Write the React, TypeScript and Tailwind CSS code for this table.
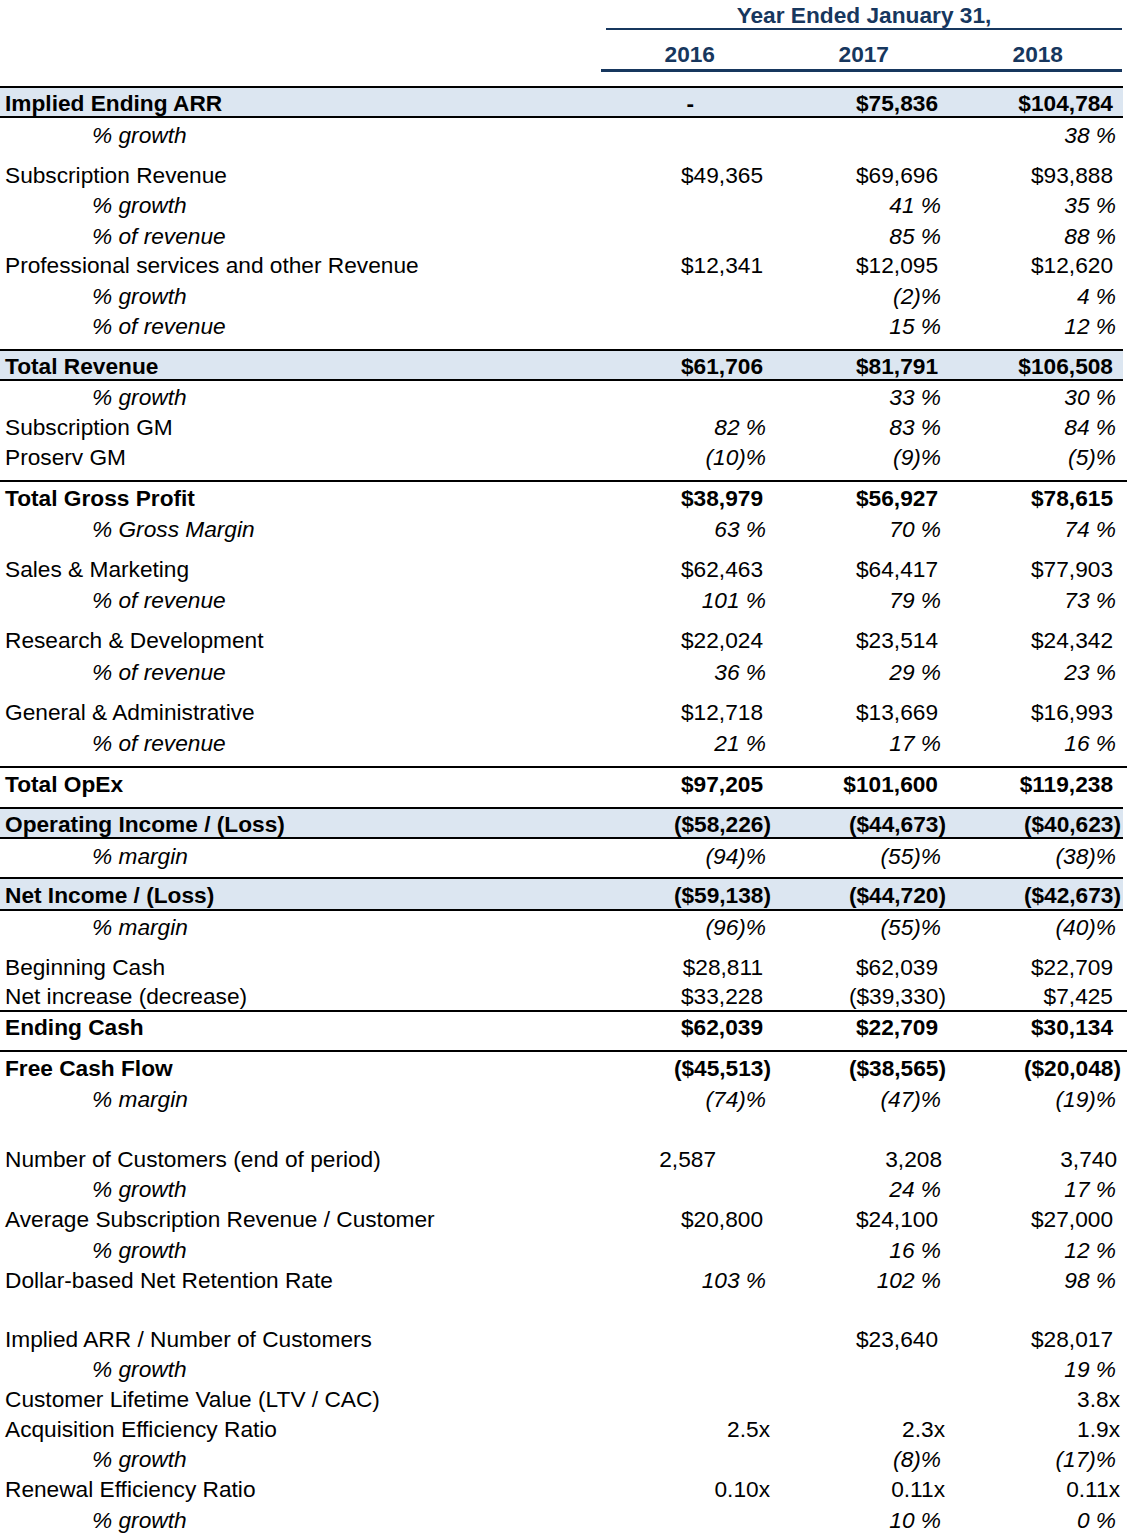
import React from "react";

type K = "n" | "p" | "i" | "x" | "c" | "c1" | "d";
type Cell = [string, K] | null;

type Item =
  | { t: "sp"; h: number }
  | {
      t: "row";
      h: number;
      label: string;
      s: "n" | "b" | "i";
      v: [Cell, Cell, Cell];
      band?: boolean;
      line?: boolean;
    };

const kcls: Record<K, string> = {
  n: "pr-[8px]",
  p: "pr-0",
  i: "italic pr-[5px]",
  x: "pr-[1px]",
  c: "pr-[4px]",
  c1: "pr-[55px]",
  d: "pr-[77px]",
};

const hcls: Record<number, string> = {
  6: "h-[6px]",
  8: "h-[8px]",
  9: "h-[9px]",
  10: "h-[10px]",
  14: "h-[14px]",
  29: "h-[29px]",
  30: "h-[30px]",
  31: "h-[31px]",
  32: "h-[32px]",
  33: "h-[33px]",
  34: "h-[34px]",
};

const N = (t: string): Cell => [t, "n"];
const P = (t: string): Cell => [t, "p"];
const I = (t: string): Cell => [t, "i"];
const X = (t: string): Cell => [t, "x"];

const items: Item[] = [
  { t: "row", h: 32, label: "Implied Ending ARR", s: "b", band: true, v: [["-", "d"], N("$75,836"), N("$104,784")] },
  { t: "row", h: 32, label: "% growth", s: "i", v: [null, null, I("38 %")] },
  { t: "sp", h: 9 },
  { t: "row", h: 30, label: "Subscription Revenue", s: "n", v: [N("$49,365"), N("$69,696"), N("$93,888")] },
  { t: "row", h: 31, label: "% growth", s: "i", v: [null, I("41 %"), I("35 %")] },
  { t: "row", h: 30, label: "% of revenue", s: "i", v: [null, I("85 %"), I("88 %")] },
  { t: "row", h: 29, label: "Professional services and other Revenue", s: "n", v: [N("$12,341"), N("$12,095"), N("$12,620")] },
  { t: "row", h: 32, label: "% growth", s: "i", v: [null, I("(2)%"), I("4 %")] },
  { t: "row", h: 29, label: "% of revenue", s: "i", v: [null, I("15 %"), I("12 %")] },
  { t: "sp", h: 9 },
  { t: "row", h: 32, label: "Total Revenue", s: "b", band: true, v: [N("$61,706"), N("$81,791"), N("$106,508")] },
  { t: "row", h: 31, label: "% growth", s: "i", v: [null, I("33 %"), I("30 %")] },
  { t: "row", h: 29, label: "Subscription GM", s: "n", v: [I("82 %"), I("83 %"), I("84 %")] },
  { t: "row", h: 30, label: "Proserv GM", s: "n", v: [I("(10)%"), I("(9)%"), I("(5)%")] },
  { t: "sp", h: 9 },
  { t: "row", h: 32, label: "Total Gross Profit", s: "b", line: true, v: [N("$38,979"), N("$56,927"), N("$78,615")] },
  { t: "row", h: 32, label: "% Gross Margin", s: "i", v: [I("63 %"), I("70 %"), I("74 %")] },
  { t: "sp", h: 9 },
  { t: "row", h: 30, label: "Sales & Marketing", s: "n", v: [N("$62,463"), N("$64,417"), N("$77,903")] },
  { t: "row", h: 32, label: "% of revenue", s: "i", v: [I("101 %"), I("79 %"), I("73 %")] },
  { t: "sp", h: 9 },
  { t: "row", h: 31, label: "Research & Development", s: "n", v: [N("$22,024"), N("$23,514"), N("$24,342")] },
  { t: "row", h: 32, label: "% of revenue", s: "i", v: [I("36 %"), I("29 %"), I("23 %")] },
  { t: "sp", h: 9 },
  { t: "row", h: 30, label: "General & Administrative", s: "n", v: [N("$12,718"), N("$13,669"), N("$16,993")] },
  { t: "row", h: 32, label: "% of revenue", s: "i", v: [I("21 %"), I("17 %"), I("16 %")] },
  { t: "sp", h: 8 },
  { t: "row", h: 32, label: "Total OpEx", s: "b", line: true, v: [N("$97,205"), N("$101,600"), N("$119,238")] },
  { t: "sp", h: 9 },
  { t: "row", h: 32, label: "Operating Income / (Loss)", s: "b", band: true, v: [P("($58,226)"), P("($44,673)"), P("($40,623)")] },
  { t: "row", h: 32, label: "% margin", s: "i", v: [I("(94)%"), I("(55)%"), I("(38)%")] },
  { t: "sp", h: 6 },
  { t: "row", h: 34, label: "Net Income / (Loss)", s: "b", band: true, v: [P("($59,138)"), P("($44,720)"), P("($42,673)")] },
  { t: "row", h: 30, label: "% margin", s: "i", v: [I("(96)%"), I("(55)%"), I("(40)%")] },
  { t: "sp", h: 10 },
  { t: "row", h: 30, label: "Beginning Cash", s: "n", v: [N("$28,811"), N("$62,039"), N("$22,709")] },
  { t: "row", h: 29, label: "Net increase (decrease)", s: "n", v: [N("$33,228"), P("($39,330)"), N("$7,425")] },
  { t: "row", h: 31, label: "Ending Cash", s: "b", line: true, v: [N("$62,039"), N("$22,709"), N("$30,134")] },
  { t: "sp", h: 9 },
  { t: "row", h: 33, label: "Free Cash Flow", s: "b", line: true, v: [P("($45,513)"), P("($38,565)"), P("($20,048)")] },
  { t: "row", h: 31, label: "% margin", s: "i", v: [I("(74)%"), I("(47)%"), I("(19)%")] },
  { t: "sp", h: 29 },
  { t: "row", h: 30, label: "Number of Customers (end of period)", s: "n", v: [["2,587", "c1"], ["3,208", "c"], ["3,740", "c"]] },
  { t: "row", h: 31, label: "% growth", s: "i", v: [null, I("24 %"), I("17 %")] },
  { t: "row", h: 29, label: "Average Subscription Revenue / Customer", s: "n", v: [N("$20,800"), N("$24,100"), N("$27,000")] },
  { t: "row", h: 32, label: "% growth", s: "i", v: [null, I("16 %"), I("12 %")] },
  { t: "row", h: 29, label: "Dollar-based Net Retention Rate", s: "n", v: [I("103 %"), I("102 %"), I("98 %")] },
  { t: "sp", h: 29 },
  { t: "row", h: 30, label: "Implied ARR / Number of Customers", s: "n", v: [null, N("$23,640"), N("$28,017")] },
  { t: "row", h: 31, label: "% growth", s: "i", v: [null, null, I("19 %")] },
  { t: "row", h: 29, label: "Customer Lifetime Value (LTV / CAC)", s: "n", v: [null, null, X("3.8x")] },
  { t: "row", h: 30, label: "Acquisition Efficiency Ratio", s: "n", v: [X("2.5x"), X("2.3x"), X("1.9x")] },
  { t: "row", h: 31, label: "% growth", s: "i", v: [null, I("(8)%"), I("(17)%")] },
  { t: "row", h: 29, label: "Renewal Efficiency Ratio", s: "n", v: [X("0.10x"), X("0.11x"), X("0.11x")] },
  { t: "row", h: 32, label: "% growth", s: "i", v: [null, I("10 %"), I("0 %")] },
];

const colW = ["w-[171px]", "w-[175px]", "w-[175px]"];

function Row({ it }: { it: Extract<Item, { t: "row" }> }) {
  const bold = it.s === "b";
  let frame = "";
  if (it.band) frame = "border-t-2 border-b-2 border-black bg-[#dce6f1] mr-[4px]";
  else if (it.line) frame = "border-t-2 border-black";
  return (
    <div className={`flex items-center pt-[1px] ${hcls[it.h]} ${frame} ${bold ? "font-bold" : ""}`}>
      <div
        className={`w-[600px] shrink-0 whitespace-nowrap ${
          it.s === "i" ? "italic pl-[92px]" : "pl-[5px]"
        }`}
      >
        {it.label}
      </div>
      {it.v.map((c, idx) => (
        <div
          key={idx}
          className={`${colW[idx]} shrink-0 text-right whitespace-nowrap ${c ? kcls[c[1]] : ""}`}
        >
          {c ? c[0] : ""}
        </div>
      ))}
    </div>
  );
}

export default function App() {
  return (
    <div className="w-[1127px] h-[1534px] overflow-hidden bg-white text-black font-['Liberation_Sans',Arial,sans-serif] text-[22.7px] leading-[26px]">
      {/* Header */}
      <div className="flex h-[28px] items-center pt-[1px]">
        <div className="ml-[606px] w-[516px] text-center font-bold text-[#17375e]">
          Year Ended January 31,
        </div>
      </div>
      <div className="ml-[606px] w-[516px] h-[2px] bg-[#17375e]" />
      <div className="flex h-[39px] items-end pb-[2px] font-bold text-[#17375e]">
        <div className="w-[600px] shrink-0" />
        <div className="w-[171px] shrink-0 text-right pr-[56px]">2016</div>
        <div className="w-[175px] shrink-0 text-right pr-[57px]">2017</div>
        <div className="w-[175px] shrink-0 text-right pr-[58px]">2018</div>
      </div>
      <div className="ml-[601px] w-[521px] h-[3px] bg-[#17375e]" />
      <div className="h-[14px]" />
      {items.map((it, i) =>
        it.t === "sp" ? (
          <div key={i} className={hcls[it.h] ?? "h-[9px]"} />
        ) : (
          <Row key={i} it={it} />
        )
      )}
    </div>
  );
}
